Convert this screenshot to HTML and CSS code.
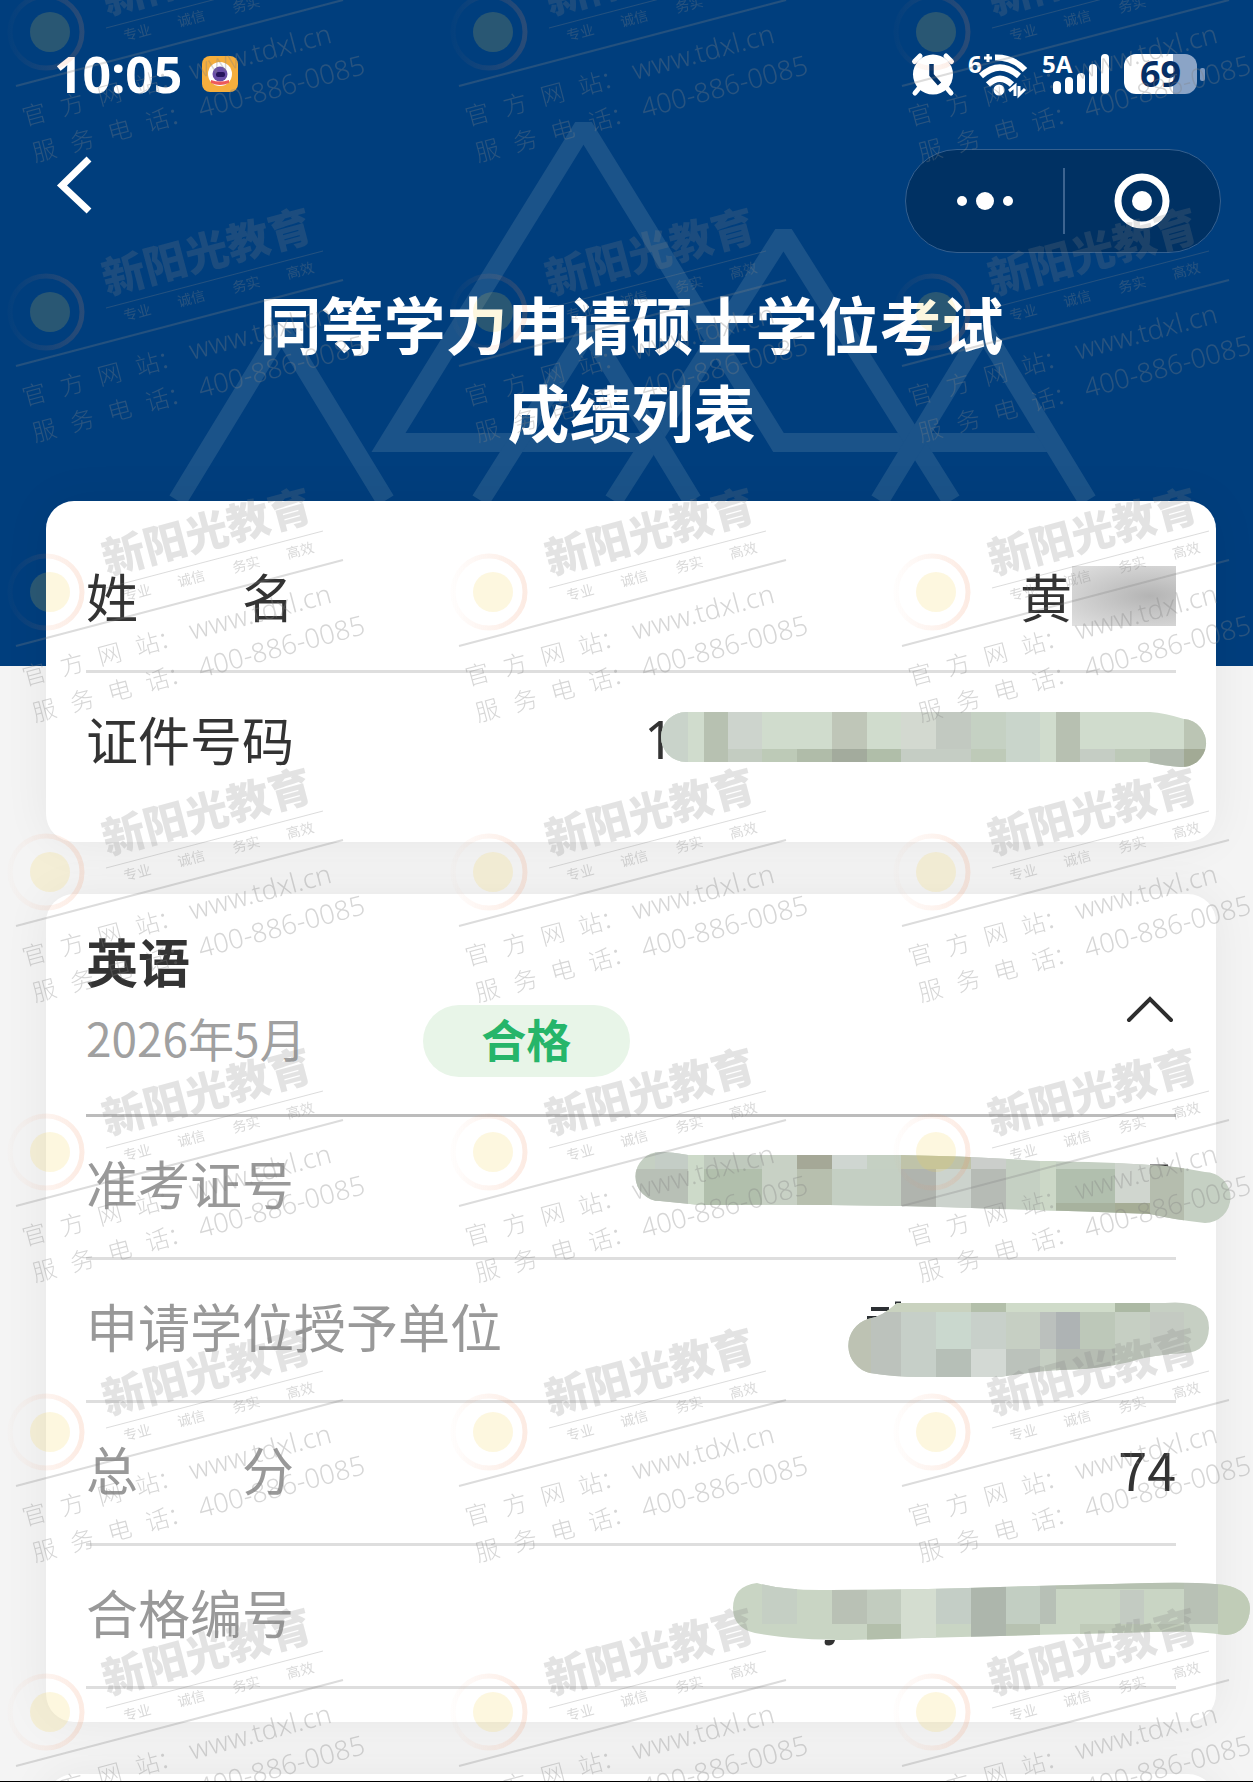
FILE: index.html
```html
<!DOCTYPE html>
<html lang="zh-CN">
<head>
<meta charset="UTF-8">
<meta name="viewport" content="width=device-width, initial-scale=1.0">
<title>成绩列表</title>
<link rel="stylesheet" href="styles.css">
</head>
<body>

<div class="page">
  <header class="hero">
    <svg class="hero-lines" viewBox="0 0 1253 500" aria-hidden="true">
      <path d="M663 442H388L580 131H586L778 442H1050"/>
      <path d="M613 500L780 238H786L951 500"/>
      <path d="M480 500L585 334H591L692 500"/>
      <path d="M177 500L278 334H284L385 500"/>
      <path d="M879 500L980 334H986L1087 500"/>
    </svg>

    <div class="status-bar">
      <div class="status-left">
        <span class="time">10:05</span>
        <svg class="app-icon" viewBox="0 0 36 36" aria-hidden="true">
          <rect width="36" height="36" rx="8" fill="#f5ae3d"/>
          <circle cx="18" cy="18" r="12" fill="#fff"/>
          <circle cx="18" cy="18" r="7.500" fill="#6a4fa8"/>
          <rect x="14" y="16" width="9" height="5" rx="2" fill="#26145c"/>
          <path d="M9 24q9 3 18 0v3q-9 4-18 0z" fill="#ee5a5a"/>
        </svg>
      </div>
      <div class="status-right">
        <svg class="alarm" viewBox="0 0 42 42" aria-hidden="true">
          <g stroke="#fff" stroke-width="5" stroke-linecap="round">
            <path d="M2.500 8.500L8 3M34 3l5.500 5.500M8 34l-5 6M34 34l5 6"/>
          </g>
          <circle cx="21" cy="21.500" r="20" fill="#fff"/>
          <path d="M19.500 11v11l8 9" fill="none" stroke="#00336b" stroke-width="4.500"/>
        </svg>
        <svg class="wifi" viewBox="0 0 60 44" aria-hidden="true">
          <text x="0" y="21" class="mini">6</text>
          <path d="M16 6h8M20 2v8" stroke="#fff" stroke-width="3"/>
          <g fill="none" stroke="#fff" stroke-width="6">
            <path d="M27 5.500Q45 5 57 18"/>
            <path d="M13 24Q32 7 51 24"/>
            <path d="M20 32.500Q32 21 44 32.500"/>
          </g>
          <circle cx="31" cy="38" r="5.500" fill="#fff"/>
          <path d="M41 39l6-5v10M57 37l-6 6V34" fill="none" stroke="#fff" stroke-width="3"/>
        </svg>
        <svg class="signal" viewBox="0 0 68 44" aria-hidden="true">
          <text x="0" y="21" class="mini">5A</text>
          <g stroke="#fff" stroke-width="8" stroke-linecap="round">
            <path d="M15 33v5M27 29v9M39 25v13M51 16v22M63 6v32"/>
          </g>
        </svg>
        <div class="battery"><span>69</span></div>
      </div>
    </div>

    <div class="nav">
      <button class="back" type="button" aria-label="返回">
        <svg viewBox="0 0 36 72"><path d="M33 10L6 36.500L33 62"/></svg>
      </button>
      <div class="capsule">
        <button type="button" aria-label="更多">
          <svg viewBox="0 0 60 50"><circle cx="7" cy="25" r="5"/><circle cx="30" cy="25" r="9"/><circle cx="53" cy="25" r="5"/></svg>
        </button>
        <button type="button" aria-label="关闭">
          <svg viewBox="0 0 60 60"><circle class="ring" cx="30" cy="30" r="24"/><circle cx="30" cy="30" r="10"/></svg>
        </button>
      </div>
    </div>

    <h1>同等学力申请硕士学位考试<br>成绩列表</h1>
  </header>

  <main>
    <section class="card profile">
      <div class="row">
        <span class="label spread"><span>姓</span><span>名</span></span>
        <span class="value">黄<i class="smudge"></i></span>
      </div>
      <div class="row">
        <span class="label">证件号码</span>
        <span class="value id-value">1</span>
        <svg class="mosaic mosaic-id" viewBox="655 705 555 70" aria-hidden="true">
          <clipPath id="clip-id"><path d="M686 712H1150Q1165 713 1184 719A24 24 0 0 1 1180 767Q1165 766 1147 762H686A25 25 0 0 1 686 712Z"/></clipPath>
          <g clip-path="url(#clip-id)">
            <rect x="655" y="705" width="555" height="70" fill="#d0dccd"/>
            <rect x="655" y="705" width="33" height="70" fill="#c9d3ca"/>
            <rect x="704" y="705" width="24" height="70" fill="#b7c1b1"/>
            <rect x="728" y="705" width="34" height="44" fill="#cdd4cd"/>
            <rect x="832" y="705" width="35" height="44" fill="#bfc6b8"/>
            <rect x="901" y="705" width="35" height="44" fill="#d3d9d0"/>
            <rect x="936" y="705" width="35" height="44" fill="#c2c9c1"/>
            <rect x="971" y="705" width="35" height="44" fill="#c5d1c3"/>
            <rect x="1006" y="705" width="34" height="70" fill="#c9d5cb"/>
            <rect x="1056" y="705" width="24" height="70" fill="#b7c0b1"/>
            <rect x="1184" y="705" width="26" height="44" fill="#bbc5b4"/>
            <rect x="728" y="749" width="34" height="26" fill="#c3ccc1"/>
            <rect x="762" y="749" width="35" height="26" fill="#bdcab7"/>
            <rect x="797" y="749" width="35" height="26" fill="#b0bca9"/>
            <rect x="832" y="749" width="35" height="26" fill="#a3ab9d"/>
            <rect x="867" y="749" width="34" height="26" fill="#b0bea9"/>
            <rect x="901" y="749" width="70" height="26" fill="#c5cdc4"/>
            <rect x="971" y="749" width="35" height="26" fill="#becab8"/>
            <rect x="1080" y="749" width="35" height="26" fill="#c5cdc4"/>
            <rect x="1115" y="749" width="35" height="26" fill="#bdc9b8"/>
            <rect x="1150" y="749" width="34" height="26" fill="#b1baae"/>
            <rect x="1184" y="749" width="26" height="26" fill="#a2aa95"/>
          </g>
        </svg>
      </div>
    </section>

    <section class="card subject">
      <div class="subject-head">
        <div>
          <h2>英语</h2>
          <div class="subject-meta">
            <span class="date">2026年5月</span>
            <span class="tag">合格</span>
          </div>
        </div>
        <button class="toggle" type="button" aria-label="收起">
          <svg viewBox="0 0 52 32"><path d="M5 27L26 6L47 27"/></svg>
        </button>
      </div>
      <div class="row">
        <span class="label">准考证号</span>
        <svg class="mosaic mosaic-ticket" viewBox="630 1145 605 85" aria-hidden="true">
          <clipPath id="clip-ticket"><path d="M660 1152Q672 1152 688 1155H900Q970 1156 1040 1161Q1110 1162 1150 1165Q1175 1166 1205 1172A25 25 0 0 1 1205 1223Q1170 1219 1150 1214Q1080 1211 1000 1209Q950 1207 900 1206Q790 1204 700 1205Q680 1203 660 1201A24 24 0 0 1 660 1152Z"/></clipPath>
          <path d="M1150 1166h18" stroke="#333" stroke-width="3"/>
          <g clip-path="url(#clip-ticket)">
            <rect x="630" y="1145" width="605" height="85" fill="#c5d0c3"/>
            <rect x="630" y="1169" width="58" height="60" fill="#b8c0b6"/>
            <rect x="655" y="1145" width="33" height="24" fill="#c4cdc6"/>
            <rect x="688" y="1145" width="16" height="85" fill="#cddac9"/>
            <rect x="704" y="1145" width="58" height="24" fill="#bfc9bd"/>
            <rect x="704" y="1169" width="58" height="60" fill="#b1bfac"/>
            <rect x="762" y="1145" width="35" height="85" fill="#c8d1c5"/>
            <rect x="797" y="1145" width="35" height="24" fill="#a5a897"/>
            <rect x="797" y="1169" width="35" height="60" fill="#b7bfae"/>
            <rect x="832" y="1145" width="35" height="24" fill="#cfd6d1"/>
            <rect x="832" y="1169" width="69" height="60" fill="#c4cfc3"/>
            <rect x="901" y="1145" width="70" height="24" fill="#bfc3a9"/>
            <rect x="901" y="1169" width="35" height="60" fill="#b0b4ae"/>
            <rect x="936" y="1169" width="35" height="60" fill="#ccd3cd"/>
            <rect x="971" y="1169" width="35" height="60" fill="#b6bbb5"/>
            <rect x="971" y="1145" width="35" height="24" fill="#cbcecb"/>
            <rect x="1040" y="1145" width="16" height="85" fill="#ccd8c7"/>
            <rect x="1056" y="1169" width="59" height="34" fill="#b1bfae"/>
            <rect x="1056" y="1203" width="59" height="24" fill="#a7b29e"/>
            <rect x="1115" y="1163" width="35" height="40" fill="#d0d6cf"/>
            <rect x="1115" y="1203" width="35" height="24" fill="#a6ad96"/>
            <rect x="1150" y="1160" width="34" height="70" fill="#b5bdae"/>
          </g>
        </svg>
      </div>
      <div class="row">
        <span class="label">申请学位授予单位</span>
        <svg class="mosaic mosaic-school" viewBox="840 1295 375 90" aria-hidden="true">
          <clipPath id="clip-school"><path d="M897 1303H1165Q1209 1299 1209 1328Q1208 1352 1185 1353Q1150 1355 1130 1362Q1100 1369 1060 1370Q1030 1372 1000 1377H920Q895 1377 870 1373A28 28 0 0 1 868 1319Q882 1317 897 1303Z"/></clipPath>
          <path d="M871 1309h18M867 1318h16M895 1303.500h6" stroke="#2c3034" stroke-width="4"/>
          <g clip-path="url(#clip-school)">
            <rect x="840" y="1295" width="375" height="90" fill="#c6cfc3"/>
            <rect x="870" y="1303" width="101" height="9" fill="#c9d2bf"/>
            <rect x="971" y="1303" width="35" height="9" fill="#b3bfaa"/>
            <rect x="1006" y="1303" width="109" height="9" fill="#cfdbc9"/>
            <rect x="1115" y="1303" width="35" height="9" fill="#acb9a4"/>
            <rect x="840" y="1312" width="31" height="73" fill="#bdc2b3"/>
            <rect x="871" y="1312" width="30" height="73" fill="#bcc2bc"/>
            <rect x="901" y="1312" width="35" height="73" fill="#c6cfc8"/>
            <rect x="936" y="1312" width="35" height="37" fill="#cad8ce"/>
            <rect x="936" y="1349" width="35" height="36" fill="#b6bfb7"/>
            <rect x="971" y="1312" width="35" height="37" fill="#c8d0ca"/>
            <rect x="971" y="1349" width="35" height="36" fill="#d3d9d4"/>
            <rect x="1006" y="1349" width="34" height="36" fill="#bbc2bb"/>
            <rect x="1040" y="1312" width="16" height="37" fill="#bbc0bd"/>
            <rect x="1056" y="1312" width="24" height="37" fill="#aeb3b4"/>
            <rect x="1056" y="1349" width="59" height="36" fill="#b6bdb3"/>
            <rect x="1080" y="1312" width="35" height="37" fill="#bdc8b9"/>
            <rect x="1150" y="1312" width="34" height="73" fill="#c4cac2"/>
          </g>
        </svg>
      </div>
      <div class="row">
        <span class="label spread"><span>总</span><span>分</span></span>
        <span class="value">74</span>
      </div>
      <div class="row">
        <span class="label">合格编号</span>
        <svg class="mosaic mosaic-cert" viewBox="728 1575 525 75" aria-hidden="true">
          <clipPath id="clip-cert"><path d="M757 1583Q785 1591 830 1590Q920 1590 1000 1587L1150 1583Q1190 1582 1215 1584Q1249 1586 1250 1608Q1249 1633 1226 1635Q1190 1630 1150 1632L1000 1636Q920 1638 850 1640Q790 1640 755 1633Q733 1628 733 1608Q733 1586 757 1583Z"/></clipPath>
          <path d="M825 1640h10q-1 5-6 5.500q-6 0-4-5.500z" fill="#333"/>
          <g clip-path="url(#clip-cert)">
            <rect x="728" y="1575" width="525" height="75" fill="#c9d5c4"/>
            <rect x="762" y="1575" width="35" height="49" fill="#c5cfc4"/>
            <rect x="832" y="1575" width="35" height="49" fill="#b9c1b5"/>
            <rect x="867" y="1575" width="34" height="49" fill="#c2ccbf"/>
            <rect x="867" y="1624" width="34" height="26" fill="#b3bfab"/>
            <rect x="901" y="1575" width="35" height="75" fill="#d4ddd0"/>
            <rect x="936" y="1575" width="35" height="49" fill="#c4cec6"/>
            <rect x="971" y="1575" width="35" height="75" fill="#adb6ac"/>
            <rect x="1006" y="1575" width="34" height="49" fill="#c2cec2"/>
            <rect x="1006" y="1624" width="34" height="26" fill="#b7c2b1"/>
            <rect x="1040" y="1575" width="16" height="49" fill="#b7c0b6"/>
            <rect x="1080" y="1624" width="104" height="26" fill="#bfcab8"/>
            <rect x="1056" y="1580" width="128" height="9" fill="#b6c1b1"/>
            <rect x="1120" y="1590" width="24" height="34" fill="#c3cbc2"/>
            <rect x="1184" y="1575" width="34" height="49" fill="#b8c1b5"/>
            <rect x="1218" y="1575" width="35" height="75" fill="#c0ccb7"/>
          </g>
        </svg>
      </div>
    </section>

    <section class="card next-card"></section>
  </main>

  <!-- repeated brand watermark over everything -->
  <svg class="watermark" aria-hidden="true">
    <defs>
      <linearGradient id="halo">
        <stop offset="0" stop-color="#f08a5a" stop-opacity=".1"/>
        <stop offset="1" stop-color="#f08a5a"/>
      </linearGradient>
      <pattern id="brand" width="443" height="280" y="-80" patternUnits="userSpaceOnUse">
        <circle cx="46" cy="112" r="36" fill="none" stroke="url(#halo)" stroke-width="5" opacity=".17"/>
        <circle cx="50" cy="112" r="20" fill="#f0d040" opacity=".17"/>
        <g stroke="#808080" opacity=".28">
          <path d="M106 108L323 51" stroke-width="1"/>
          <path d="M16 166L343 80" stroke-width="2"/>
        </g>
        <g class="brand-text">
          <text class="brand-name" transform="translate(107 95) rotate(-15)">新阳光教育</text>
          <g class="brand-motto">
            <text transform="translate(125 121) rotate(-15)">专业</text>
            <text transform="translate(179 107) rotate(-15)">诚信</text>
            <text transform="translate(234 93) rotate(-15)">务实</text>
            <text transform="translate(288 79) rotate(-15)">高效</text>
          </g>
          <g class="brand-contact">
            <text transform="translate(25 206) rotate(-15)" x="0 39 78 117 140">官方网站：</text>
            <text class="latin" transform="translate(192 160) rotate(-15)">www.tdxl.cn</text>
            <text transform="translate(35 242) rotate(-15)" x="0 39 78 117 140">服务电话：</text>
            <text class="latin" transform="translate(201 198) rotate(-15)">400-886-0085</text>
          </g>
        </g>
      </pattern>
    </defs>
    <rect width="100%" height="100%" fill="url(#brand)"/>
  </svg>
</div>

</body>
</html>
```
FILE: styles.css
```css
* {
  box-sizing: border-box;
}

body {
  margin: 0;
  font-family: "Noto Sans CJK SC", "Noto Sans", sans-serif;
  background: #f4f4f4;
  color: #333;
}

button {
  padding: 0;
  border: none;
  background: none;
  cursor: pointer;
}

svg {
  display: block;
  overflow: visible;
}

.page {
  position: relative;
  height: 100vh;
  overflow: hidden;
  border-bottom: 1px solid #000;
}

/* header */
.hero {
  position: relative;
  padding: 50px 32px 207px 46px;
  background: #003e7d;
  color: #fff;
}

.hero-lines {
  position: absolute;
  top: 0;
  left: 50%;
  width: 1253px;
  height: 501px;
  transform: translateX(-50%);
  fill: none;
  stroke: #1b5389;
  stroke-width: 19px;
}

.status-bar {
  position: relative;
  display: flex;
  justify-content: space-between;
  height: 99px;
  padding: 0 16px 0 8px;
}

.status-left,
.status-right {
  display: flex;
  align-items: center;
  height: 48px;
}

.status-left {
  gap: 20px;
}

.status-right {
  gap: 14px;
}

.time {
  font-family: "Noto Sans", sans-serif;
  font-size: 50px;
  line-height: 48px;
  font-weight: 700;
}

.app-icon {
  width: 36px;
  height: 36px;
}

.alarm {
  width: 42px;
  height: 42px;
}

.wifi {
  width: 60px;
  height: 44px;
}

.signal {
  width: 68px;
  height: 44px;
}

.mini {
  font-family: "Noto Sans", sans-serif;
  font-size: 24px;
  font-weight: 700;
  fill: #fff;
}

.battery {
  position: relative;
  width: 73px;
  height: 40px;
  margin-right: 8px;
  border-radius: 12px;
  background: linear-gradient(90deg, #fff 67%, #8ba4c6 67%);
  color: #062f66;
  font-family: "Noto Sans", sans-serif;
  font-size: 36px;
  line-height: 40px;
  font-weight: 700;
  text-align: center;
}

.battery::after {
  content: "";
  position: absolute;
  top: 14px;
  right: -8px;
  width: 5px;
  height: 13px;
  border-radius: 2px;
  background: #7c98be;
}

.nav {
  position: relative;
  display: flex;
  justify-content: space-between;
  align-items: flex-start;
}

.back {
  padding-left: 10px;
}

.back svg {
  width: 36px;
  height: 72px;
  fill: none;
  stroke: #fff;
  stroke-width: 7px;
}

.capsule {
  display: flex;
  width: 316px;
  height: 104px;
  border: 1px solid #35608f;
  border-radius: 52px;
  background: #003163;
}

.capsule button {
  position: relative;
  display: flex;
  flex: 1;
  align-items: center;
  justify-content: center;
}

.capsule button + button::before {
  content: "";
  position: absolute;
  top: 18px;
  left: 0;
  width: 2px;
  height: 66px;
  background: #3d6490;
}

.capsule svg {
  width: 60px;
  fill: #fff;
}

.capsule .ring {
  fill: none;
  stroke: #fff;
  stroke-width: 7px;
}

h1 {
  position: relative;
  margin: 26px 4px 4px 0;
  font-size: 62px;
  line-height: 88px;
  font-weight: 700;
  text-align: center;
}

/* cards */
main {
  position: relative;
  display: flex;
  flex-direction: column;
  gap: 52px;
  margin-top: -165px;
  padding: 0 37px 0 46px;
}

.card {
  padding: 29px 40px 26px;
  border-radius: 28px;
  background: #fff;
  box-shadow: 0 0 48px rgba(0, 0, 0, 0.06);
}

.row {
  position: relative;
  display: flex;
  align-items: center;
  justify-content: space-between;
  height: 143px;
  padding-bottom: 8px;
  border-bottom: 3px solid #dedede;
  font-size: 52px;
  line-height: 60px;
}

.profile .row:last-child {
  border-bottom-color: transparent;
}

.subject .label {
  color: #999;
}

.spread {
  display: flex;
  justify-content: space-between;
  width: 208px;
}

.value {
  display: flex;
  align-items: center;
}

.id-value {
  margin-right: 502px;
  font-family: "Noto Sans", sans-serif;
}

.smudge {
  width: 104px;
  height: 60px;
  background: radial-gradient(ellipse at 75% 50%, #b4b4b4, #c8c8c8 45%, #e0e0e0);
}

.mosaic {
  position: absolute;
}

.mosaic-id {
  top: 32px;
  right: -34px;
  width: 555px;
  height: 70px;
}

.mosaic-ticket {
  top: 28px;
  right: -59px;
  width: 605px;
  height: 85px;
}

.mosaic-school {
  top: 35px;
  right: -39px;
  width: 375px;
  height: 90px;
}

.mosaic-cert {
  top: 29px;
  right: -77px;
  width: 525px;
  height: 75px;
}

.subject {
  padding-bottom: 33px;
}

.subject-head {
  display: flex;
  align-items: flex-start;
  justify-content: space-between;
  height: 194px;
  border-bottom: 3px solid #bcbcbc;
}

h2 {
  margin: 0;
  font-size: 52px;
  line-height: 76px;
  font-weight: 700;
}

.subject-meta {
  display: flex;
  align-items: center;
  gap: 117px;
  height: 84px;
}

.date {
  padding-bottom: 8px;
  color: #a0a0a0;
  font-size: 46px;
}

.tag {
  width: 207px;
  border-radius: 36px;
  background: #e8f5e8;
  color: #26b56a;
  font-size: 45px;
  line-height: 68px;
  padding-bottom: 4px;
  font-weight: 700;
  text-align: center;
}

.toggle {
  padding-top: 70px;
}

.toggle svg {
  width: 52px;
  height: 32px;
  fill: none;
  stroke: #2e2e2e;
  stroke-width: 4px;
  stroke-linecap: round;
}

.next-card {
  height: 80px;
}

/* watermark */
.watermark {
  position: absolute;
  top: 0;
  left: 0;
  width: 100%;
  height: 100%;
  pointer-events: none;
}

.brand-text {
  fill: #808080;
}

.brand-name {
  font-size: 43px;
  font-weight: 900;
  opacity: 0.22;
}

.brand-motto {
  font-size: 14px;
  opacity: 0.3;
}

.brand-contact {
  font-size: 24px;
  font-weight: 300;
  opacity: 0.32;
}

.latin {
  font-family: "Noto Sans", sans-serif;
  font-size: 27px;
}
```
